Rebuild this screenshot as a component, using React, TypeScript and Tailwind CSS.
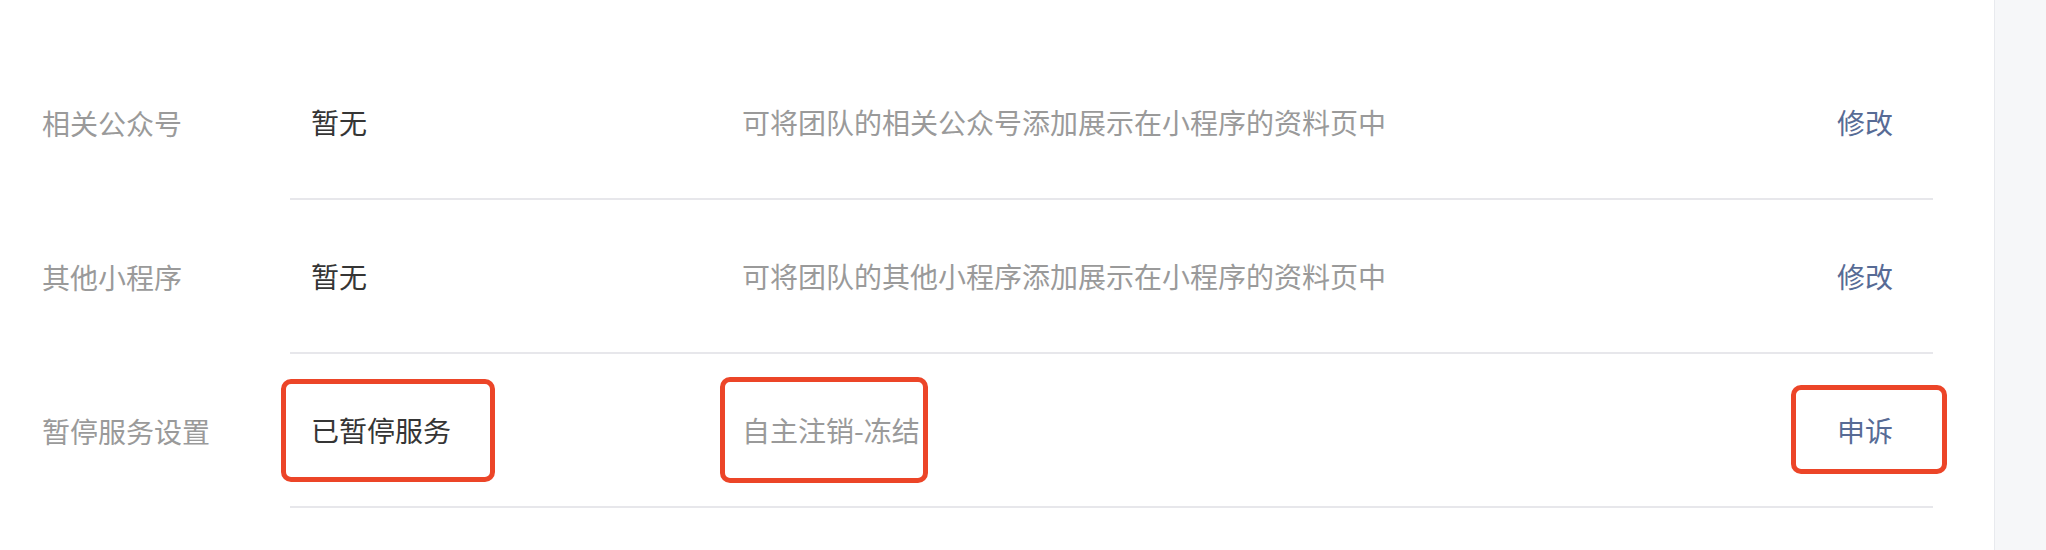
const rows = [
  { label: "相关公众号", value: "暂无", desc: "可将团队的相关公众号添加展示在小程序的资料页中", action: "修改" },
  { label: "其他小程序", value: "暂无", desc: "可将团队的其他小程序添加展示在小程序的资料页中", action: "修改" },
];

const font = { fontFamily: '"Noto Sans CJK SC", "Noto Sans", sans-serif' };

function Mark({ children, box }: { children: React.ReactNode; box: string }) {
  return (
    <span className="relative inline-block">
      {children}
      <span className={`pointer-events-none absolute rounded-[10px] border-[5px] border-[#ec4528] ${box}`} />
    </span>
  );
}

export default function App() {
  return (
    <div className="flex h-[550px] w-[2046px] bg-white" style={font}>
      <div className="flex-1 pt-[46px]">
        {rows.map((r) => (
          <div key={r.label} className="flex h-[154px]">
            <div className="flex w-[290px] items-center pl-[42px] text-[28px] leading-[40px] text-[#9a9a9a]">{r.label}</div>
            <div className="mr-[61px] flex flex-1 items-center border-b-2 border-[#e7e7eb] pl-[21px] pr-[40px] text-[28px] leading-[40px]">
              <div className="w-[431px] text-[#353535]">{r.value}</div>
              <div className="flex-1 text-[#9a9a9a]">{r.desc}</div>
              <div className="text-[#576b95]">{r.action}</div>
            </div>
          </div>
        ))}
        <div className="flex h-[154px]">
          <div className="flex w-[290px] items-center pl-[42px] text-[28px] leading-[40px] text-[#9a9a9a]">暂停服务设置</div>
          <div className="mr-[61px] flex flex-1 items-center border-b-2 border-[#e7e7eb] pl-[21px] pr-[40px] text-[28px] leading-[40px]">
            <div className="w-[431px] text-[#353535]">
              <Mark box="-left-[30px] -right-[44px] -top-[31px] -bottom-[32px]">已暂停服务</Mark>
            </div>
            <div className="flex-1 text-[#9a9a9a]">
              <Mark box="-left-[22px] -right-[8px] -top-[33px] -bottom-[33px]">自主注销-冻结</Mark>
            </div>
            <div className="text-[#576b95]">
              <Mark box="-left-[46px] -right-[54px] -top-[25px] -bottom-[24px]">申诉</Mark>
            </div>
          </div>
        </div>
      </div>
      <div className="w-[52px] border-l border-[#e8eaee] bg-[#f6f7f9]" />
    </div>
  );
}
